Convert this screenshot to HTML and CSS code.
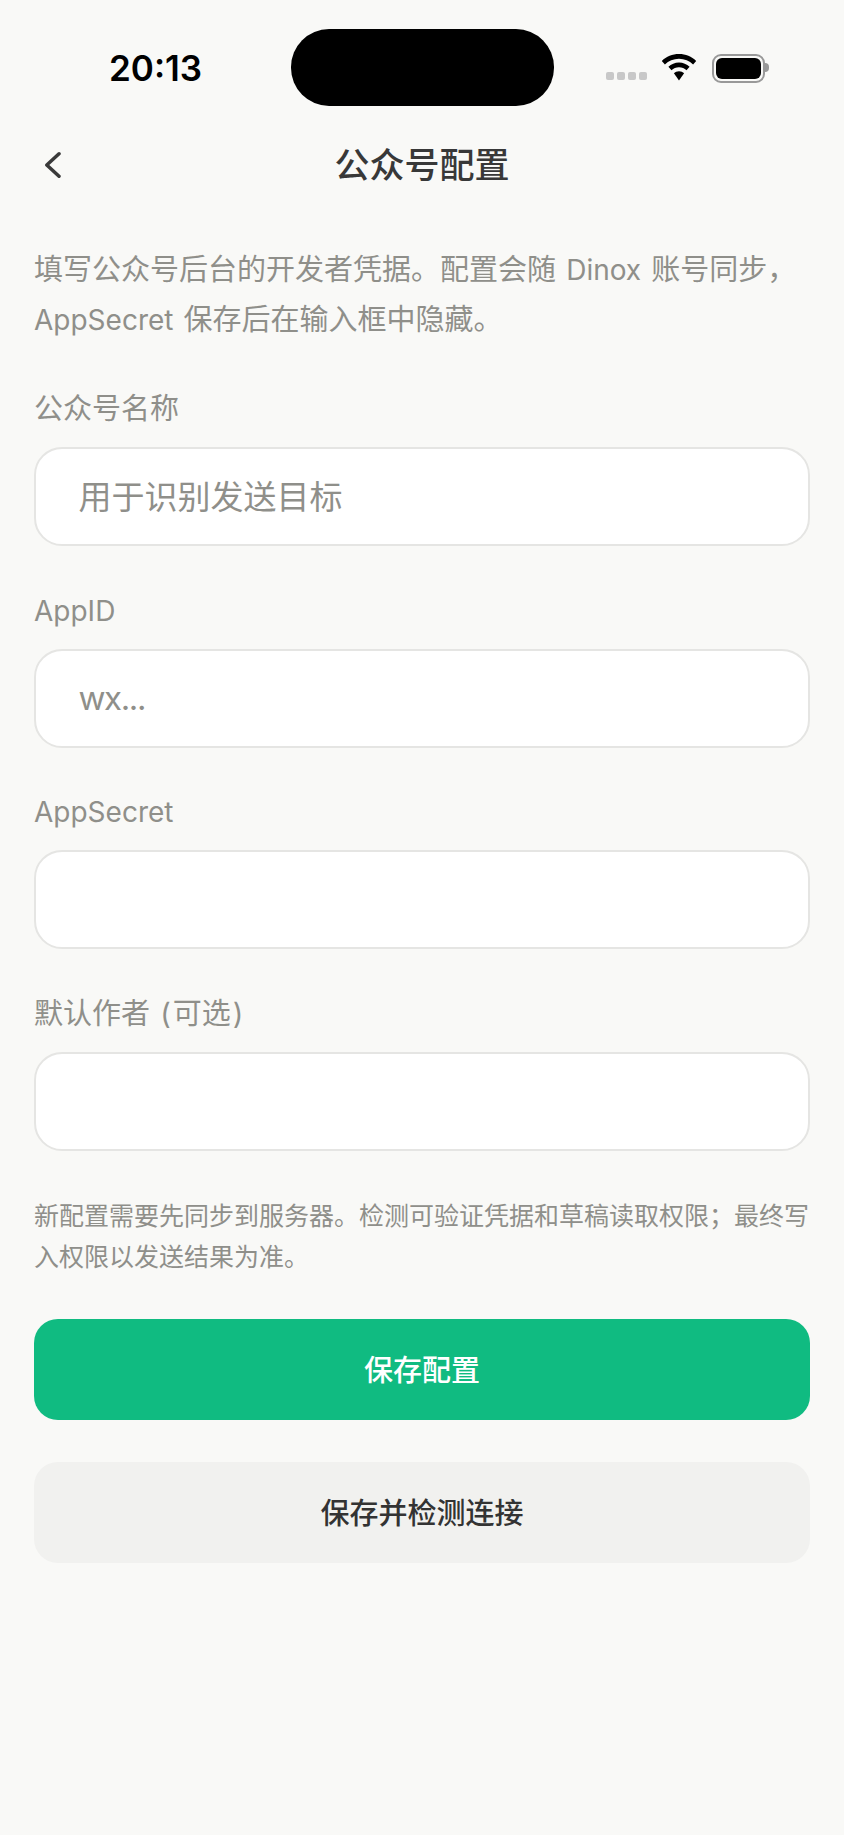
FILE: index.html
```html
<!DOCTYPE html>
<html lang="zh-CN">
<head>
<meta charset="utf-8">
<title>公众号配置</title>
<link rel="stylesheet" href="styles.css">
</head>
<body>
<div class="page">
  <div class="status">
    <span class="time">20:13</span>
    <div class="island"></div>
    <div class="status-icons">
      <div class="dots"><i></i><i></i><i></i><i></i></div>
      <svg class="wifi" width="36" height="27" viewBox="0 0 36 27"><path d="M18 0C11.3 0 5.4 2.600 .8 6.900l3.100 3.500C7.600 6.900 12.500 4.800 18 4.800s10.400 2.100 14.100 5.600l3.100-3.500C30.600 2.600 24.700 0 18 0z"/><path d="M18 8.600c-4.100 0-7.800 1.600-10.600 4.200l3.100 3.500c2-1.800 4.600-3 7.500-3s5.500 1.200 7.500 3l3.100-3.500C25.800 10.200 22.100 8.600 18 8.600z"/><path d="M18 17.200c-2 0-3.800.8-5.100 2L18 26.500l5.100-7.300c-1.300-1.200-3.100-2-5.100-2z"/></svg>
      <div class="battery"><div class="battery-fill"></div></div>
      <div class="battery-nub"></div>
    </div>
  </div>
  <header class="nav">
    <svg class="back" width="18" height="28" viewBox="0 0 18 28"><path d="M16 2.800 3.800 14 16 25.200" fill="none" stroke="#3a3a3a" stroke-width="3.500" stroke-linecap="round" stroke-linejoin="round"/></svg>
    <h1 class="title">公众号配置</h1>
  </header>
  <main class="content">
    <p class="intro">填写公众号后台的开发者凭据。配置会随 <span class="latin">Dinox</span> 账号同步，<br><span class="latin">AppSecret</span> 保存后在输入框中隐藏。</p>
    <label class="field">
      <span class="label">公众号名称</span>
      <input class="input" type="text" placeholder="用于识别发送目标">
    </label>
    <label class="field">
      <span class="label"><span class="latin">AppID</span></span>
      <input class="input input-latin" type="text" placeholder="wx...">
    </label>
    <label class="field">
      <span class="label"><span class="latin">AppSecret</span></span>
      <input class="input" type="password">
    </label>
    <label class="field">
      <span class="label">默认作者 <span class="paren-open">(</span>可选<span class="paren-close">)</span></span>
      <input class="input" type="text">
    </label>
    <p class="note">新配置需要先同步到服务器。检测可验证凭据和草稿读取权限；最终写入权限以发送结果为准。</p>
    <button class="btn btn-primary" type="button">保存配置</button>
    <button class="btn btn-secondary" type="button">保存并检测连接</button>
  </main>
</div>
</body>
</html>
```
FILE: styles.css
```css
* { box-sizing: border-box; }
html, body { margin: 0; padding: 0; }
body {
  width: 844px;
  height: 1835px;
  overflow: hidden;
  background: #f9f9f7;
  font-family: "Inter", "Noto Sans CJK SC", sans-serif;
  color: #8f8f8a;
}
.page { display: flex; flex-direction: column; height: 100%; }
.status {
  display: flex;
  align-items: center;
  height: 77px;
  margin-top: 29px;
  position: relative;
}
.time {
  width: 92px;
  margin-left: 109px;
  font-size: 35px;
  font-weight: 600;
  color: #000;
  line-height: 1;
  white-space: nowrap;
  margin-top: 2px;
}
.island {
  width: 263px;
  height: 77px;
  margin-left: 90px;
  background: #000;
  border-radius: 38px;
}
.status-icons {
  display: flex;
  align-items: center;
  margin-left: 52px;
}
.dots { display: flex; gap: 3px; margin-top: 17px; margin-right: 14px; }
.dots i { display: block; width: 8px; height: 8px; border-radius: 2px; background: #c8c8c8; }
.wifi { fill: #000; margin-right: 15px; margin-top: -1px; }
.battery {
  width: 53px;
  height: 29px;
  border: 2px solid #999;
  border-radius: 9px;
  padding: 2px;
  margin-top: 1px;
}
.battery-fill { width: 100%; height: 100%; background: #000; border-radius: 6px; }
.battery-nub { width: 4px; height: 9px; background: #999; border-radius: 0 4px 4px 0; }
.nav {
  display: flex;
  align-items: center;
  justify-content: center;
  height: 118px;
  position: relative;
}
.back { position: absolute; left: 43px; top: 45px; }
.title {
  margin: 0;
  font-size: 35px;
  font-weight: 500;
  color: #383838;
  line-height: 1.4;
}
.content {
  display: flex;
  flex-direction: column;
  padding: 20.500px 34px 0;
}
.intro {
  margin: 0;
  font-size: 29px;
  line-height: 50px;
  word-spacing: 2px;
  white-space: nowrap;
}
.latin { font-size: 28px; }
.field { display: flex; flex-direction: column; margin-top: 39.500px; }
.label {
  display: block;
  font-size: 29px;
  line-height: 50px;
  margin-bottom: 13px;
}
.paren-open { margin: 0 2px 0 2px; }
.paren-close { margin-left: 2px; }
.input {
  display: block;
  width: 100%;
  height: 99px;
  padding: 0 42.500px;
  background: #fff;
  border: 2px solid #e5e5e3;
  border-radius: 28px;
  font-family: inherit;
  font-size: 33px;
  color: #333;
  outline: none;
}
.input-latin { letter-spacing: -1.400px; }
.input::placeholder { color: #8f8f8a; opacity: 1; }
.note {
  margin: 45px 0 0;
  font-size: 25px;
  line-height: 41px;
}
.btn {
  display: block;
  width: 100%;
  height: 101px;
  border: 0;
  border-radius: 24px;
  font-family: inherit;
  font-size: 29px;
  font-weight: 500;
  padding: 0 0 2px;
}
.btn-primary { margin-top: 41px; background: #10bb81; color: #fff; }
.btn-secondary { margin-top: 42px; background: #f1f1ef; color: #333; }
```
